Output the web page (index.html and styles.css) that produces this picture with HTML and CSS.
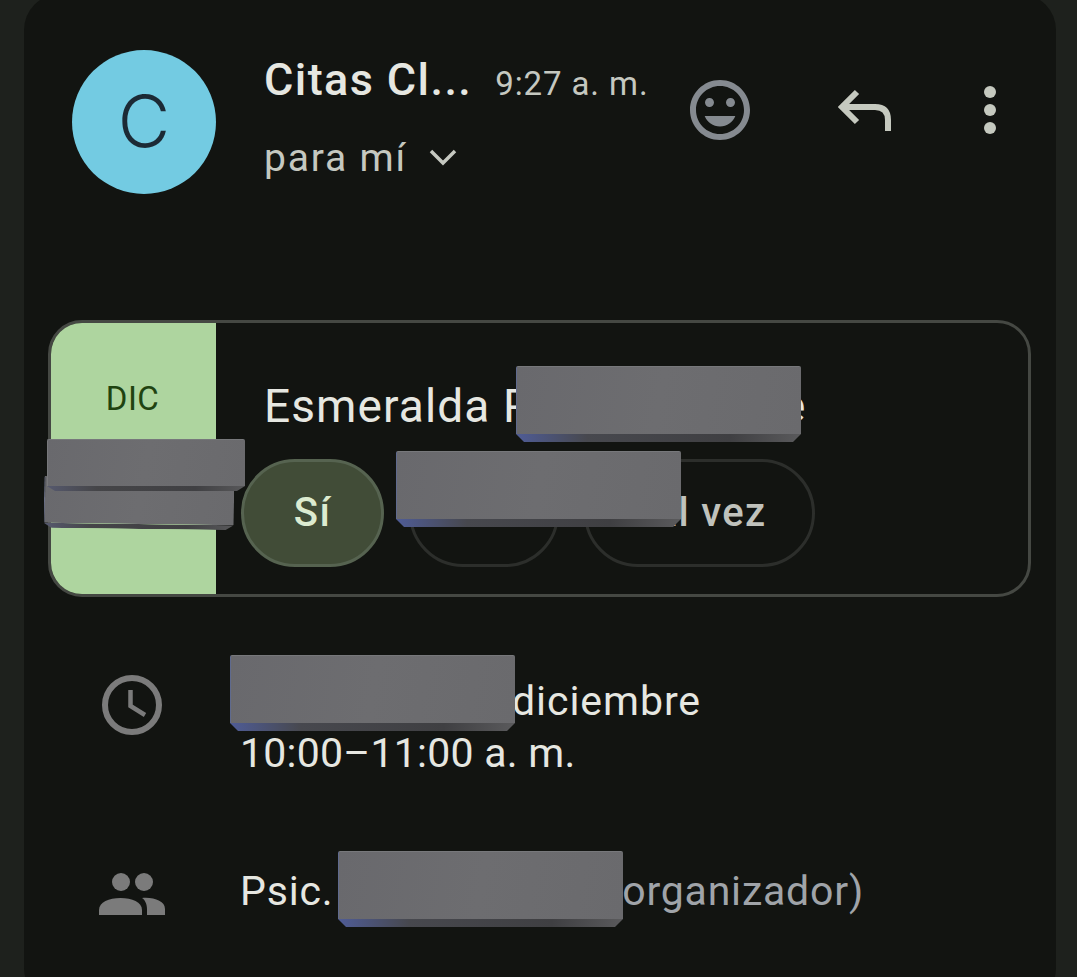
FILE: index.html
```html
<!DOCTYPE html>
<html lang="es">

<head>
    <meta charset="UTF-8">
    <meta name="viewport" content="width=device-width, initial-scale=1.0">
    <title>Citas</title>
    <link rel="stylesheet" href="styles.css">
</head>

<body>
    <div id="outer">
        <!-- cabecera del mensaje -->
        <div class="head">
            <div class="avatar">C</div>
            <div class="sender">
                <div class="sender-line">
                    <span class="name">Citas Cl...</span>
                    <span class="time">9:27 a. m.</span>
                </div>
                <div class="to">
                    <span>para mí</span>
                    <svg class="chevron" width="30" height="20" viewBox="0 0 30 20">
                        <path d="M3 3 L15 15 L27 3" />
                    </svg>
                </div>
            </div>
            <svg class="icon icon-mood" width="72" height="72" viewBox="0 0 24 24">
                <path d="M11.99 2C6.47 2 2 6.48 2 12s4.47 10 9.99 10C17.52 22 22 17.52 22 12S17.52 2 11.99 2zM12 20c-4.42 0-8-3.58-8-8s3.58-8 8-8 8 3.58 8 8-3.58 8-8 8zm3.5-9c.83 0 1.5-.67 1.5-1.5S16.33 8 15.5 8 14 8.67 14 9.5s.67 1.5 1.5 1.5zm-7 0c.83 0 1.5-.67 1.5-1.5S9.33 8 8.5 8 7 8.67 7 9.5 7.67 11 8.5 11zm3.5 6.5c2.33 0 4.31-1.46 5.11-3.5H6.89c.8 2.04 2.78 3.5 5.11 3.5z" />
            </svg>
            <svg class="icon icon-reply" width="72" height="72" viewBox="0 0 72 72">
                <path d="M29 18 L14 33 L29 48 M14 33 H47 Q60 33 60 46 V57" />
            </svg>
            <svg class="icon icon-more" width="72" height="72" viewBox="0 0 72 72">
                <circle cx="36" cy="18" r="6" />
                <circle cx="36" cy="36" r="6" />
                <circle cx="36" cy="54" r="6" />
            </svg>
        </div>

        <!-- tarjeta de la invitacion -->
        <div class="invite">
            <div class="month">DIC</div>
            <div class="invite-body">
                <div class="invite-title">Esmeralda P<span class="gap-title"></span>e</div>
                <div class="answers">
                    <a class="answer answer-on" href="#">Sí</a>
                    <a class="answer answer-no" href="#">No</a>
                    <a class="answer answer-maybe" href="#">Tal vez</a>
                </div>
            </div>
        </div>

        <!-- fecha y organizador -->
        <div class="row row-date">
            <svg class="icon icon-clock" width="72" height="72" viewBox="0 0 72 72">
                <circle cx="36" cy="36" r="27" />
                <path d="M34.5 21 V37 L49 46" />
            </svg>
            <div class="row-text">
                <div class="day"><span class="gap-row"></span>diciembre</div>
                <div class="hours">10:00–11:00 a. m.</div>
            </div>
        </div>
        <div class="row row-people">
            <svg class="icon icon-people" width="72" height="72" viewBox="0 0 72 72">
                <circle cx="25" cy="24" r="9" />
                <circle cx="48" cy="24" r="9" />
                <path d="M3 57 V52 C3 44 13 40 24.500 40 S46 44 46 52 V57 Z" />
                <path d="M51 57 V51 C51 46 49 42 46 40 C58 39 69 43 69 51 V57 Z" />
            </svg>
            <div class="row-text">Psic. <span class="gap-row gap-psic"></span><span class="muted">organizador)</span></div>
        </div>
    </div>

    <!-- bloques que tapan los datos personales -->
    <div class="redact redact-low"></div>
    <div class="redact redact-up"></div>
    <div class="redact redact-title"></div>
    <div class="redact redact-answers"></div>
    <div class="redact redact-date"></div>
    <div class="redact redact-psic"></div>
</body>

</html>
```

FILE: styles.css
```css
* {
    margin: 0;
    padding: 0;
    box-sizing: border-box;
}

html,
body {
    height: 977px;
    overflow: hidden;
}

body {
    position: relative;
    background-color: #1e211d;
    font-family: Roboto, "Noto Sans", sans-serif;
    color: #e6e7e1;
}

#outer {
    height: 1010px;
    margin: -6px 21px 0 24px;
    padding-top: 56px;
    background-color: #121411;
    border-radius: 36px;
}

.head {
    display: flex;
    align-items: flex-start;
    height: 144px;
    padding-left: 48px;
}

.avatar {
    flex: none;
    width: 144px;
    height: 144px;
    border-radius: 50%;
    background-color: #73cbe2;
    color: #1c2a35;
    font-family: Inter, Roboto, sans-serif;
    font-size: 72px;
    font-weight: 300;
    line-height: 142px;
    text-align: center;
}

.sender {
    width: 420px;
    margin-left: 48px;
}

.sender-line {
    display: flex;
    align-items: baseline;
    gap: 23px;
    height: 60px;
    line-height: 60px;
}

.name {
    font-size: 45px;
    font-weight: 500;
    letter-spacing: 1.4px;
}

.time {
    font-size: 33px;
    letter-spacing: 0.9px;
    color: #c5c8c0;
}

.to {
    display: flex;
    align-items: center;
    gap: 21px;
    margin-top: 26px;
    font-size: 39px;
    letter-spacing: 1.8px;
    line-height: 44px;
    color: #c5c8c0;
}

.chevron path {
    fill: none;
    stroke: #c5c8c0;
    stroke-width: 3.5;
}

.icon {
    flex: none;
}

.icon-mood {
    margin-top: 24px;
    fill: #858a90;
}

.icon-reply {
    margin: 24px 54px 0 72px;
}

.icon-reply path {
    fill: none;
    stroke: #c5c9bf;
    stroke-width: 6;
}

.icon-more {
    margin-top: 24px;
    fill: #c5c9bf;
}

.invite {
    display: flex;
    height: 277px;
    margin: 126px 25px 0 24px;
    border: 3px solid #454843;
    border-radius: 34px;
    overflow: hidden;
}

.month {
    flex: none;
    width: 165px;
    padding: 56px 2px 0 0;
    background-color: #aed59f;
    color: #1f4310;
    font-size: 33px;
    letter-spacing: 0.4px;
    line-height: 40px;
    text-align: center;
}

.invite-body {
    padding: 53px 0 0 25px;
}

.invite-title {
    margin-left: 23px;
    font-size: 46px;
    letter-spacing: 1.1px;
    line-height: 60px;
}

.gap-title {
    display: inline-block;
    width: 248px;
}

.answers {
    display: flex;
    gap: 25px;
    margin-top: 23px;
}

.answer {
    display: block;
    height: 108px;
    border: 3px solid #2c2e2b;
    border-radius: 54px;
    color: #c0c2bc;
    font-size: 40px;
    font-weight: 500;
    letter-spacing: 1.3px;
    line-height: 102px;
    text-align: center;
    text-decoration: none;
}

.answer-on {
    width: 143px;
    background-color: #414c37;
    border-color: #566350;
    color: #dcebd0;
}

.answer-no {
    width: 150px;
}

.answer-maybe {
    width: 231px;
}

.row {
    display: flex;
    align-items: flex-start;
    padding-left: 72px;
}

.row-date {
    margin-top: 78px;
}

.row-people {
    margin-top: 86px;
}

.row-date .icon {
    margin-top: -6px;
}

.row-people .icon {
    margin-top: -7px;
}

.row-text {
    margin-left: 72px;
    font-size: 41px;
    letter-spacing: 0.8px;
    line-height: 52px;
}

.day {
    letter-spacing: 0.95px;
}

.hours {
    letter-spacing: 0.25px;
}

.gap-row {
    display: inline-block;
    width: 272px;
}

.gap-psic {
    width: 278px;
}

.muted {
    color: #a0a4a9;
}

.icon-clock circle,
.icon-clock path {
    fill: none;
    stroke: #7b7b7b;
}

.icon-clock circle {
    stroke-width: 6;
}

.icon-clock path {
    stroke-width: 4.5;
}

.icon-people {
    fill: #7b7b7b;
}

/* bloque gris con su canto inferior en bisel */
.redact {
    position: absolute;
    width: 285px;
    height: 68px;
    background: linear-gradient(100deg, #69696d, #6d6d70 50%, #6a6a6d);
    border-top: 1px solid #77787b;
    border-left: 1px solid #5f6a8e;
    border-radius: 2px 2px 0 0;
}

.redact::after {
    content: "";
    position: absolute;
    left: -1px;
    right: 0;
    top: 67px;
    height: 8px;
    background: linear-gradient(90deg, #4f5c96, #47484e 25%, #3f3f42 75%, #5a5a5c);
    clip-path: polygon(0 0, 100% 0, calc(100% - 8px) 100%, 8px 100%);
}

.redact-title {
    left: 516px;
    top: 366px;
}

.redact-answers {
    left: 396px;
    top: 451px;
}

.redact-date {
    left: 230px;
    top: 655px;
}

.redact-psic {
    left: 338px;
    top: 851px;
}

.redact-up {
    left: 47px;
    top: 439px;
    width: 198px;
    height: 47px;
    border-left-color: #77787b;
}

.redact-low {
    left: 44px;
    top: 477px;
    width: 190px;
    height: 47px;
    border-left-color: #6a6f85;
    transform: rotate(0.7deg);
}

.redact-up::after,
.redact-low::after {
    top: 46px;
    height: 5px;
    background: linear-gradient(90deg, #56596e, #454548 25%, #404043 75%, #58585a);
}
```
